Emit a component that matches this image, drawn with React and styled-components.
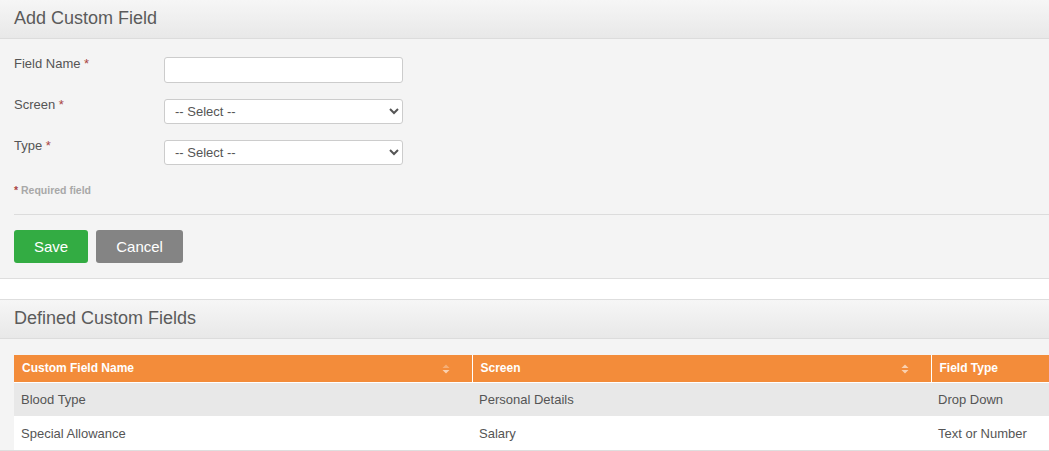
import React from "react";
import styled, { createGlobalStyle } from "styled-components";

const Global = createGlobalStyle`
  html, body { margin: 0; padding: 0; background: #fff; overflow: hidden; }
  body { font-family: "Liberation Sans", Arial, sans-serif; color: #555; }
  * { box-sizing: border-box; }
`;

const Page = styled.div`
  display: flex;
  flex-direction: column;
  gap: 20px;
  width: 1049px;
`;

const Box = styled.section`
  background: #f4f4f4;
  border-top: ${(p) => (p.$topBorder ? "1px solid #dedede" : "none")};
  border-bottom: 1px solid #dedede;
  overflow: hidden;
`;

const BoxHead = styled.div`
  height: 39px;
  padding: 0 14px;
  display: flex;
  align-items: center;
  background: linear-gradient(to bottom, #f6f6f6 0%, #e8e8e8 100%);
  border-bottom: 1px solid #dcdcdc;
`;

const Title = styled.h1`
  margin: 0;
  font-size: 18px;
  font-weight: normal;
  color: #5b5b5b;
  position: relative;
  top: -1px;
`;

const FormBody = styled.div`
  padding: 18px 0 15px 14px;
`;

const FormRow = styled.div`
  display: flex;
  align-items: flex-start;
  height: 25px;
  margin-bottom: ${(p) => p.$mb || 16}px;
`;

const Label = styled.label`
  width: 150px;
  font-size: 13px;
  color: #555;
  line-height: 15px;
  position: relative;
  top: ${(p) => p.$top || 0}px;
`;

const Star = styled.span`
  color: #a94442;
`;

const TextInput = styled.input`
  width: 239px;
  height: 26px;
  border: 1px solid #ccc;
  border-radius: 3px;
  background: #fff;
  font: 13px "Liberation Sans", Arial, sans-serif;
  padding: 0 10px;
`;

const Select = styled.select`
  width: 239px;
  height: 25px;
  border: 1px solid #ccc;
  border-radius: 3px;
  background: #fff;
  font: 13px "Liberation Sans", Arial, sans-serif;
  color: #555;
  padding: 0 6px;
`;

const Required = styled.div`
  font-size: 10.5px;
  font-weight: bold;
  color: #a8a8a8;
  line-height: 12px;
  margin-top: 19px;
`;

const Rule = styled.hr`
  margin: 18px 0 15px 0;
  border: 0;
  border-top: 1px solid #dcdcdc;
`;

const Buttons = styled.div`
  display: flex;
  gap: 8px;
`;

const Button = styled.button`
  height: 33px;
  padding: 0 20px;
  border: 0;
  border-radius: 3px;
  font: 15px "Liberation Sans", Arial, sans-serif;
  color: #fff;
  background: ${(p) => (p.$variant === "save" ? "#33ac43" : "#848484")};
`;

const TableBody = styled.div`
  padding: 16px 0 0 14px;
`;

const Table = styled.table`
  border-collapse: collapse;
  table-layout: fixed;
  width: 1120px;
  font-size: 13px;
`;

const Th = styled.th`
  background: #f38c3a;
  color: #fff;
  font-weight: bold;
  font-size: 12px;
  text-align: left;
  height: 27px;
  padding: 0 8px;
  border-right: 1px solid #fff;
  border-bottom: 1px solid #fff;
  position: relative;
`;

const SortIcon = styled.svg`
  position: absolute;
  right: 22px;
  top: 9px;
`;

const Tr = styled.tr`
  background: ${(p) => (p.$odd ? "#e8e8e8" : "#fff")};
`;

const Td = styled.td`
  height: 34px;
  padding: 0 7px;
  color: #555;
`;

const Sort = ({ upOpacity = 0.6, downOpacity = 0.6 }) => (
  <SortIcon width="8" height="10" viewBox="0 0 8 10">
    <polygon points="0.5,4 4,0.5 7.5,4" fill="#fff" opacity={upOpacity} />
    <polygon points="0.5,6 4,9.5 7.5,6" fill="#fff" opacity={downOpacity} />
  </SortIcon>
);

export default function App() {
  return (
    <>
      <Global />
      <Page>
        <Box>
          <BoxHead>
            <Title>Add Custom Field</Title>
          </BoxHead>
          <FormBody>
            <FormRow $mb={17}>
              <Label $top={-1}>
                Field Name <Star>*</Star>
              </Label>
              <TextInput type="text" />
            </FormRow>
            <FormRow $mb={16}>
              <Label $top={-2}>
                Screen <Star>*</Star>
              </Label>
              <Select defaultValue="">
                <option value="">-- Select --</option>
              </Select>
            </FormRow>
            <FormRow $mb={0}>
              <Label $top={-2}>
                Type <Star>*</Star>
              </Label>
              <Select defaultValue="">
                <option value="">-- Select --</option>
              </Select>
            </FormRow>
            <Required>
              <Star>*</Star> Required field
            </Required>
            <Rule />
            <Buttons>
              <Button $variant="save">Save</Button>
              <Button $variant="cancel">Cancel</Button>
            </Buttons>
          </FormBody>
        </Box>
        <Box $topBorder>
          <BoxHead>
            <Title>Defined Custom Fields</Title>
          </BoxHead>
          <TableBody>
            <Table>
              <colgroup>
                <col style={{ width: 458 }} />
                <col style={{ width: 459 }} />
                <col />
              </colgroup>
              <thead>
                <tr>
                  <Th>
                    Custom Field Name
                    <Sort upOpacity={0.3} downOpacity={0.6} />
                  </Th>
                  <Th>
                    Screen
                    <Sort upOpacity={0.6} downOpacity={0.6} />
                  </Th>
                  <Th>Field Type</Th>
                </tr>
              </thead>
              <tbody>
                <Tr $odd>
                  <Td>Blood Type</Td>
                  <Td>Personal Details</Td>
                  <Td>Drop Down</Td>
                </Tr>
                <Tr>
                  <Td>Special Allowance</Td>
                  <Td>Salary</Td>
                  <Td>Text or Number</Td>
                </Tr>
              </tbody>
            </Table>
          </TableBody>
        </Box>
      </Page>
    </>
  );
}
